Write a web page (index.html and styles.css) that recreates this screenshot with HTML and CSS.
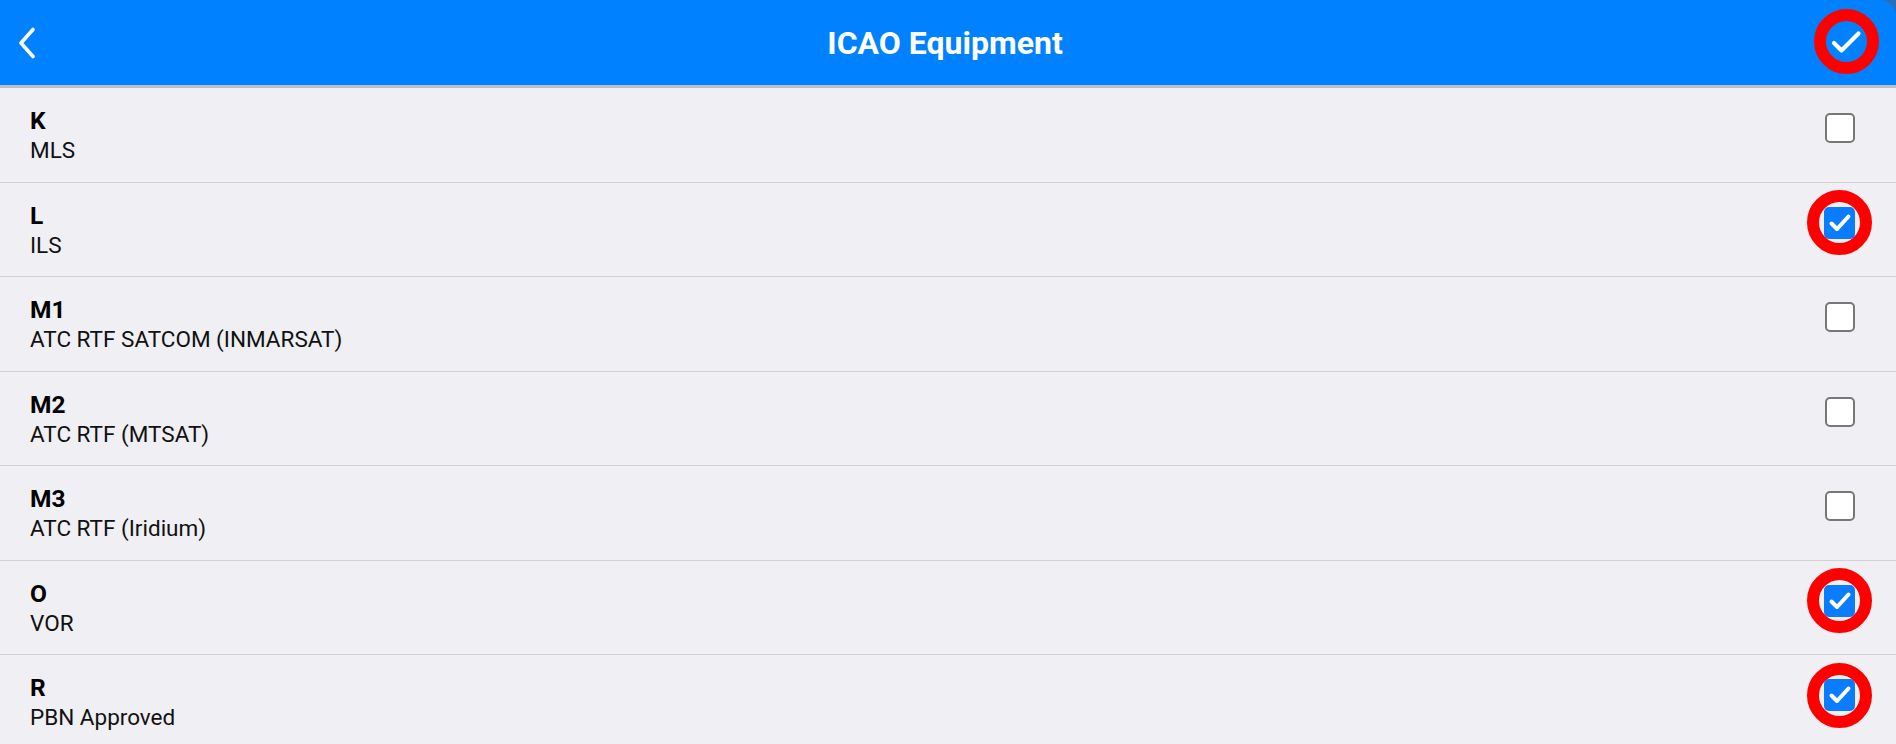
FILE: index.html
```html
<!DOCTYPE html>
<html lang="en">
<head>
  <meta charset="UTF-8" />
  <meta name="viewport" content="width=device-width, initial-scale=1.0"/>
  <title>ICAO Equipment</title>
  <link rel="stylesheet" href="styles.css">
</head>
<body>
  <div class="topbar">
    <header class="navbar">
      <button class="nav-back" aria-label="Back">
        <svg width="22" height="32" viewBox="0 0 22 32"><path d="M17 2.5 L5 16 L17 29.5" fill="none" stroke="#fff" stroke-width="3.6" stroke-linecap="round" stroke-linejoin="round"/></svg>
      </button>
      <h1>ICAO Equipment</h1>
      <button class="nav-done" aria-label="Done">
        <svg width="34" height="26" viewBox="0 0 34 26"><path d="M5 14 L12.5 21.5 L29.5 4.5" fill="none" stroke="#fff" stroke-width="4.2" stroke-linecap="round" stroke-linejoin="round"/></svg>
        <span class="mark"></span>
      </button>
    </header>
  </div>

  <main>
    <ul class="equip-list">
      <li class="equip-row">
        <div class="equip-text"><span class="code">K</span><span class="name">MLS</span></div>
        <span class="check"></span>
      </li>
      <li class="equip-row">
        <div class="equip-text"><span class="code">L</span><span class="name">ILS</span></div>
        <span class="check on"><svg width="24" height="20" viewBox="0 0 24 20"><path d="M3.5 10.5 L9 16 L20.5 3.5" fill="none" stroke="#fff" stroke-width="4" stroke-linecap="round" stroke-linejoin="round"/></svg><span class="mark"></span></span>
      </li>
      <li class="equip-row">
        <div class="equip-text"><span class="code">M1</span><span class="name">ATC RTF SATCOM (INMARSAT)</span></div>
        <span class="check"></span>
      </li>
      <li class="equip-row">
        <div class="equip-text"><span class="code">M2</span><span class="name">ATC RTF (MTSAT)</span></div>
        <span class="check"></span>
      </li>
      <li class="equip-row">
        <div class="equip-text"><span class="code">M3</span><span class="name">ATC RTF (Iridium)</span></div>
        <span class="check"></span>
      </li>
      <li class="equip-row">
        <div class="equip-text"><span class="code">O</span><span class="name">VOR</span></div>
        <span class="check on"><svg width="24" height="20" viewBox="0 0 24 20"><path d="M3.5 10.5 L9 16 L20.5 3.5" fill="none" stroke="#fff" stroke-width="4" stroke-linecap="round" stroke-linejoin="round"/></svg><span class="mark"></span></span>
      </li>
      <li class="equip-row">
        <div class="equip-text"><span class="code">R</span><span class="name">PBN Approved</span></div>
        <span class="check on"><svg width="24" height="20" viewBox="0 0 24 20"><path d="M3.5 10.5 L9 16 L20.5 3.5" fill="none" stroke="#fff" stroke-width="4" stroke-linecap="round" stroke-linejoin="round"/></svg><span class="mark"></span></span>
      </li>
    </ul>
  </main>
</body>
</html>
```

FILE: styles.css
```css
html, body {
  margin: 0;
  padding: 0;
}
body {
  font-family: Roboto, "Liberation Sans", Arial, sans-serif;
  background-color: #efeff4;
  color: #000;
  overflow: hidden;
}

/* top bar */
.topbar {
  background-color: #2d6db3;
}
.navbar {
  height: 85px;
  background-color: #0081ff;
  border-top-right-radius: 16px;
  border-bottom: 3px solid #bdbdc2;
  display: flex;
  align-items: center;
  justify-content: space-between;
  padding: 0 26px 0 12px;
  color: white;
}
.navbar h1 {
  margin: 0;
  font-size: 32px;
  font-weight: 700;
  flex: 1;
  text-align: center;
  padding-left: 26px;
}
.nav-back, .nav-done {
  background: none;
  border: none;
  padding: 0;
  display: flex;
  align-items: center;
  justify-content: center;
  cursor: pointer;
}
.nav-back {
  width: 30px;
  height: 40px;
  margin-top: 1px;
}
.nav-done {
  position: relative;
  width: 48px;
  height: 48px;
  margin-top: -2px;
}

/* red annotation ring */
.mark {
  position: absolute;
  left: 50%;
  top: 50%;
  width: 41px;
  height: 41px;
  margin: -32.5px 0 0 -32.5px;
  border: 12px solid #ff0000;
  border-radius: 50%;
}

/* list */
.equip-list {
  list-style: none;
  margin: 0;
  padding: 0;
}
.equip-row {
  box-sizing: border-box;
  height: 94.5px;
  border-bottom: 1px solid #d2d2d6;
  display: flex;
  align-items: flex-start;
  justify-content: space-between;
  padding: 0 41px 0 30px;
}
.equip-text {
  display: flex;
  flex-direction: column;
  padding-top: 18px;
}
.code {
  font-size: 24.5px;
  font-weight: 700;
  line-height: 30px;
}
.name {
  font-size: 22.5px;
  line-height: 28px;
  color: #111;
}
.check {
  position: relative;
  box-sizing: border-box;
  width: 30px;
  height: 30px;
  margin-top: 25px;
  border: 2px solid #777;
  border-radius: 5px;
  background: white;
  display: flex;
  align-items: center;
  justify-content: center;
}
.check.on {
  width: 31px;
  height: 32px;
  margin-top: 24px;
  border: none;
  background: #0a7cff;
}
```
